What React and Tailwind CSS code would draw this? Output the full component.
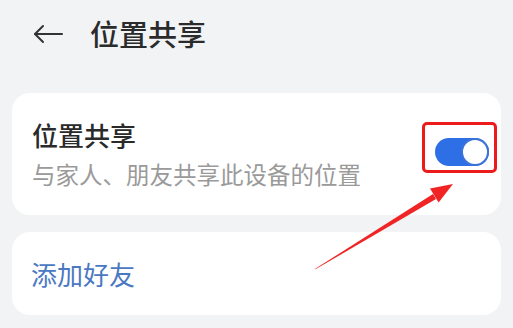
import React from 'react';

const font = { fontFamily: '"Noto Sans CJK SC", "Noto Sans", sans-serif' };

function BackArrow() {
  return (
    <svg width="30" height="20" viewBox="0 0 30 20" fill="none" stroke="#333" strokeWidth="2" strokeLinecap="round" strokeLinejoin="round">
      <path d="M29 10H2" />
      <path d="M10 2L2 10L10 18" />
    </svg>
  );
}

function Toggle({ on }) {
  return (
    <div className={`w-[54px] h-[28px] rounded-full flex ${on ? 'justify-end bg-[#2f6fe6]' : 'justify-start bg-gray-300'}`}>
      <div className="w-[28px] h-[28px] rounded-full bg-white border-2 border-[#3d72d9]" />
    </div>
  );
}

function RedArrow() {
  // tail (315,269) -> tip (453,184)
  return (
    <svg className="absolute left-0 top-0 pointer-events-none" width="513" height="328" viewBox="0 0 513 328">
      <polygon
        points="315,269.6 315.6,268.6 433,194 436,199"
        fill="#f02424"
      />
      <polygon points="453,184 430,188.6 438.6,202.4" fill="#f02424" />
    </svg>
  );
}

export default function App() {
  return (
    <div className="relative w-[513px] h-[328px] bg-[#f1f3f5] overflow-hidden text-[#2a2a2a]" style={font}>
      <div className="h-[67px] flex items-center pl-[33px]">
        <BackArrow />
        <h1 className="ml-[27px] text-[29px] leading-none font-medium text-[#2b2b2b]">位置共享</h1>
      </div>

      <div className="px-3 mt-[26px] space-y-[17px]">
        <div className="relative h-[122px] rounded-[18px] bg-white pl-[20px] pr-[12px] flex items-center justify-between">
          <div>
            <p className="text-[26px] leading-[34px] font-medium">位置共享</p>
            <p className="mt-[6px] text-[23.5px] leading-[32px] text-[#9a9a9a]">与家人、朋友共享此设备的位置</p>
          </div>
          <div className="-mt-[4px]">
            <Toggle on />
          </div>
          <div className="absolute right-[4px] top-[29px] w-[75px] h-[51px] border-[3px] border-[#ec1c1c] rounded-[5px]" />
        </div>

        <div className="h-[83px] rounded-[18px] bg-white pl-[19px] flex items-center">
          <p className="text-[26px] leading-none text-[#4a78c2]">添加好友</p>
        </div>
      </div>

      <RedArrow />
    </div>
  );
}
